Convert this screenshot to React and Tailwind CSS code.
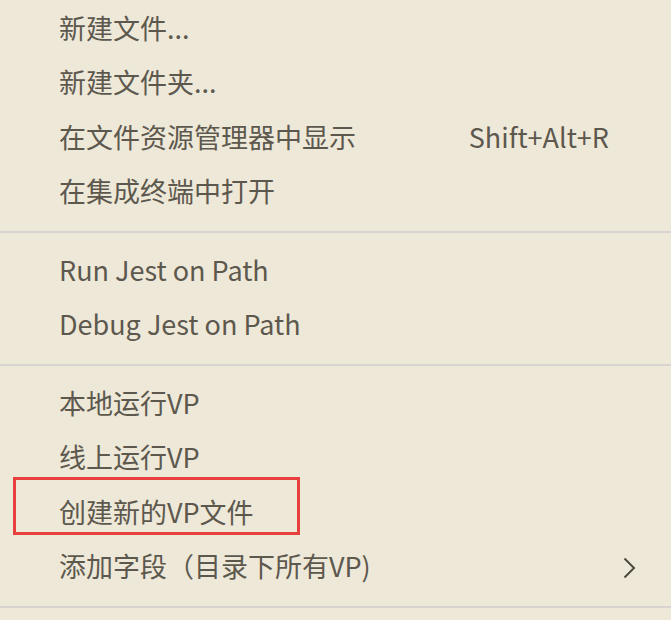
import React from "react";

const font = { fontFamily: '"Noto Sans CJK SC", "Noto Sans", sans-serif' };

function Row({ label, shortcut, submenu, boxed }) {
  return (
    <div className="relative flex h-[54.5px] items-center pl-[59px] pr-[62px]">
      {boxed && (
        <div className="pointer-events-none absolute left-[13px] top-[-9px] h-[58px] w-[287px] border-[3px] border-[#e8403e]" />
      )}
      <span className="relative top-[-2px] flex-1 whitespace-nowrap">{label}</span>
      {shortcut && <span className="relative top-[-2px] whitespace-nowrap">{shortcut}</span>}
      {submenu && (
        <svg className="absolute right-[35px] top-[16px]" width="13" height="22" viewBox="0 0 13 22" fill="none">
          <path d="M1.5 1.5 L11 11 L1.5 20.5" stroke="#4f4a42" strokeWidth="2" />
        </svg>
      )}
    </div>
  );
}

function Sep() {
  return (
    <div className="py-[11px]">
      <div className="h-[2px] bg-[#d9d3d0]" />
    </div>
  );
}

export default function App() {
  return (
    <div
      className="h-[620px] w-[671px] overflow-hidden bg-[#eee8d8] pt-[2px] text-[27px] leading-none text-[#5d584e]"
      style={font}
    >
      <Row label="新建文件..." />
      <Row label="新建文件夹..." />
      <Row label="在文件资源管理器中显示" shortcut="Shift+Alt+R" />
      <Row label="在集成终端中打开" />
      <Sep />
      <Row label="Run Jest on Path" />
      <Row label="Debug Jest on Path" />
      <Sep />
      <Row label="本地运行VP" />
      <Row label="线上运行VP" />
      <Row label="创建新的VP文件" boxed />
      <Row label="添加字段（目录下所有VP)" submenu />
      <Sep />
    </div>
  );
}
